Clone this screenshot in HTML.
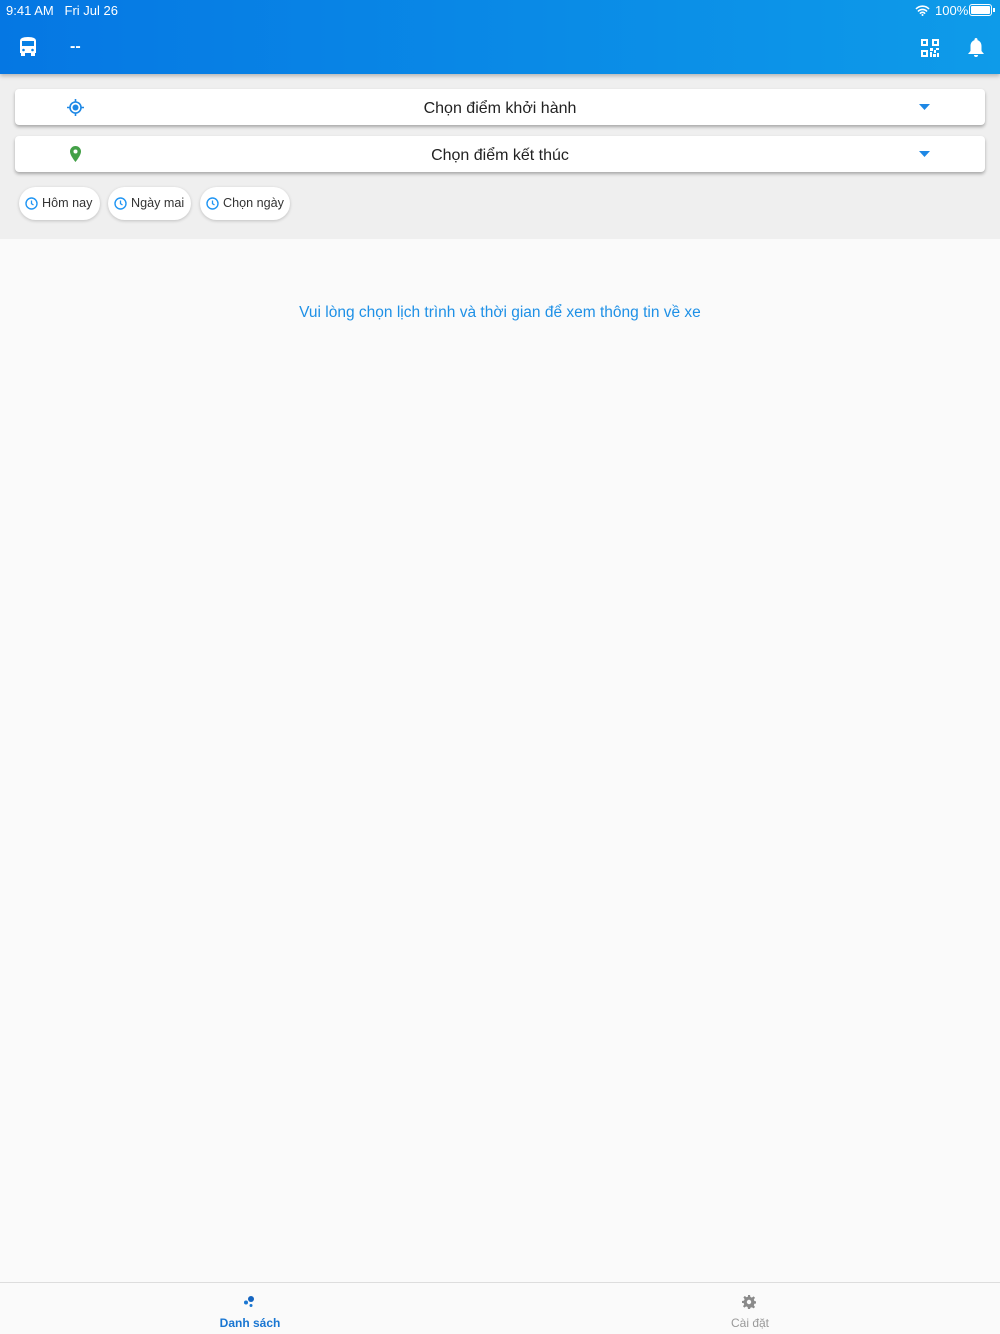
<!DOCTYPE html>
<html><head><meta charset="utf-8"><style>
*{margin:0;padding:0;box-sizing:border-box}
body{width:1000px;height:1334px;background:#fafafa;font-family:"Liberation Sans",sans-serif;position:relative;overflow:hidden}
.hdr{position:absolute;left:0;top:0;width:1000px;height:74px;background:linear-gradient(90deg,#0577e3,#0e9be9);box-shadow:0 2px 4px rgba(0,0,0,.25);z-index:2}
.sb{position:absolute;top:3px;font-size:13px;color:#fff}
.grey{position:absolute;left:0;top:74px;width:1000px;height:165px;background:#efefef}
.card{position:absolute;left:15px;width:970px;height:36px;background:#fff;border-radius:4px;box-shadow:0 2px 3px rgba(0,0,0,.3);font-size:16px;color:#222;text-align:center;line-height:39px}
.card svg{position:absolute}
.chip{position:absolute;top:187px;height:33px;background:#fff;border-radius:17px;box-shadow:0 1px 3px rgba(0,0,0,.2);font-size:12.6px;color:#333;line-height:33px;padding-left:23px}
.chip svg{position:absolute;left:6px;top:10px}
.msg{position:absolute;top:304px;width:1000px;text-align:center;color:#1e90e6;font-size:15.5px}
.tab{position:absolute;left:0;top:1282px;width:1000px;height:52px;background:#fafafa;border-top:1px solid #ddd}
</style></head><body>
<div class="hdr">
<div class="sb" style="left:6px">9:41 AM&nbsp;&nbsp;&nbsp;Fri Jul 26</div>
<svg style="position:absolute;left:915px;top:5px" width="15" height="11" viewBox="0 0 15 11"><path d="M1 4a9 9 0 0 1 13 0M3 6.5a6 6 0 0 1 9 0M5 8.7a3 3 0 0 1 5 0" stroke="#fff" stroke-width="1.6" fill="none"/><circle cx="7.5" cy="10" r="1" fill="#fff"/></svg>
<div class="sb" style="left:935px">100%</div>
<div style="position:absolute;left:969px;top:4px;width:23px;height:12px;border:1px solid #fff;border-radius:3px;padding:1px"><div style="background:#fff;width:100%;height:100%;border-radius:1px"></div></div>
<div style="position:absolute;left:993px;top:8px;width:2px;height:4px;background:#fff"></div>
<svg style="position:absolute;left:19px;top:37px" width="18" height="20" viewBox="0 0 18 20"><path d="M1 4Q1 0 9 0Q17 0 17 4V16H1Z" fill="#fff"/><rect x="3" y="4" width="12" height="5" fill="#0781e5"/><circle cx="4.5" cy="13" r="1.3" fill="#0781e5"/><circle cx="13.5" cy="13" r="1.3" fill="#0781e5"/><rect x="2" y="16" width="4" height="3" fill="#fff"/><rect x="12" y="16" width="4" height="3" fill="#fff"/></svg>
<div style="position:absolute;left:70px;top:38px;color:#fff;font-size:16px;font-weight:bold">--</div>
<svg style="position:absolute;left:921px;top:39px" width="18" height="18" viewBox="0 0 18 18" fill="#fff"><path d="M0 0h7v7H0zM2 2v3h3V2zM11 0h7v7h-7zM13 2v3h3V2zM0 11h7v7H0zM2 13v3h3v-3zM9 9h3v3H9zM13 11h2v3h-2zM15 9h3v2h-3zM9 13h2v5H9zM12 15h3v3h-3zM16 14h2v4h-2z"/></svg>
<svg style="position:absolute;left:967px;top:38px" width="18" height="20" viewBox="0 0 18 20" fill="#fff"><path d="M9 0c1 0 1.5.7 1.5 1.5v.6C13 3 14.5 5 14.5 8v5l2.5 3H1l2.5-3V8C3.5 5 5 3 7.5 2.1v-.6C7.5.7 8 0 9 0zM7 17h4a2 2 0 0 1-4 0z"/></svg>
</div>
<div class="grey"></div>
<div class="card" style="top:89px">Chọn điểm khởi hành
<svg style="left:52px;top:10px" width="17" height="17" viewBox="0 0 17 17"><circle cx="8.5" cy="8.5" r="5.5" stroke="#1e88e5" stroke-width="1.6" fill="none"/><circle cx="8.5" cy="8.5" r="3" fill="#1e88e5"/><path d="M8.5 0v3M8.5 14v3M0 8.5h3M14 8.5h3" stroke="#1e88e5" stroke-width="1.6"/></svg>
<svg style="left:904px;top:15px" width="11" height="6"><path d="M0 0h11L5.5 6z" fill="#1e88e5"/></svg></div>
<div class="card" style="top:136px">Chọn điểm kết thúc
<svg style="left:55px;top:10px" width="11" height="16" viewBox="0 0 11 16"><path d="M5.5 0A5.5 5.5 0 0 1 11 5.5C11 9.5 5.5 16 5.5 16S0 9.5 0 5.5A5.5 5.5 0 0 1 5.5 0z" fill="#43a047"/><circle cx="5.5" cy="5.5" r="2" fill="#fff"/></svg>
<svg style="left:904px;top:15px" width="11" height="6"><path d="M0 0h11L5.5 6z" fill="#1e88e5"/></svg></div>
<div class="chip" style="left:19px;width:81px">Hôm nay<svg width="13" height="13" viewBox="0 0 13 13"><circle cx="6.5" cy="6.5" r="5.5" stroke="#2196f3" stroke-width="1.4" fill="none"/><path d="M6.5 3.5v3.2l2 1.3" stroke="#2196f3" stroke-width="1.3" fill="none"/></svg></div>
<div class="chip" style="left:108px;width:83px">Ngày mai<svg width="13" height="13" viewBox="0 0 13 13"><circle cx="6.5" cy="6.5" r="5.5" stroke="#2196f3" stroke-width="1.4" fill="none"/><path d="M6.5 3.5v3.2l2 1.3" stroke="#2196f3" stroke-width="1.3" fill="none"/></svg></div>
<div class="chip" style="left:200px;width:90px">Chọn ngày<svg width="13" height="13" viewBox="0 0 13 13"><circle cx="6.5" cy="6.5" r="5.5" stroke="#2196f3" stroke-width="1.4" fill="none"/><path d="M6.5 3.5v3.2l2 1.3" stroke="#2196f3" stroke-width="1.3" fill="none"/></svg></div>
<div class="msg">Vui lòng chọn lịch trình và thời gian để xem thông tin về xe</div>
<div class="tab">
<svg style="position:absolute;left:243px;top:12px" width="13" height="13"><circle cx="8" cy="4" r="3" fill="#1565c0"/><circle cx="3" cy="7.5" r="2" fill="#1976d2"/><circle cx="8" cy="10.5" r="1.5" fill="#1976d2"/></svg>
<div style="position:absolute;left:200px;width:100px;top:33px;text-align:center;font-size:12px;font-weight:bold;color:#1976d2">Danh sách</div>
<svg style="position:absolute;left:742px;top:12px" width="14" height="14" viewBox="0 0 14 14"><path d="M6 0h2l.4 2 1.5.6 1.7-1.2 1.4 1.4-1.2 1.7.6 1.5 2 .4v2l-2 .4-.6 1.5 1.2 1.7-1.4 1.4-1.7-1.2-1.5.6L8 14H6l-.4-2-1.5-.6-1.7 1.2-1.4-1.4 1.2-1.7-.6-1.5L0 8V6l2-.4.6-1.5-1.2-1.7 1.4-1.4 1.7 1.2 1.5-.6z" fill="#8a8a8a"/><circle cx="7" cy="7" r="2.2" fill="#fafafa"/></svg>
<div style="position:absolute;left:700px;width:100px;top:33px;text-align:center;font-size:12px;color:#999">Cài đặt</div>
</div>
</body></html>
